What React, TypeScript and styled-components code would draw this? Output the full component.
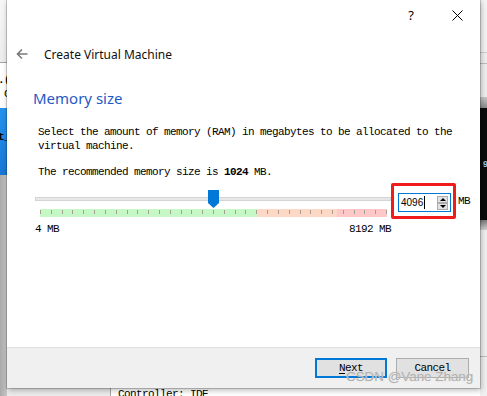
import React from "react";
import styled, { createGlobalStyle } from "styled-components";

const mono = `"Liberation Mono", "DejaVu Sans Mono", monospace`;
const ui = `"Noto Sans", "Open Sans", sans-serif`;

const GlobalStyle = createGlobalStyle`
  html, body {
    margin: 0;
    padding: 0;
    background: #ffffff;
  }
  body {
    width: 487px;
    height: 396px;
    overflow: hidden;
  }
`;

const Screen = styled.div`
  position: relative;
  width: 487px;
  height: 396px;
  overflow: hidden;
  display: grid;
  grid-template-columns: 7px 473px 7px;
  grid-template-rows: 388px 8px;
`;

const SideStrip = styled.div<{ $col: number }>`
  grid-row: 1 / 3;
  grid-column: ${(p) => p.$col};
  display: flex;
  flex-direction: column;
  overflow: hidden;
`;

const Band = styled.div<{ $h?: number; $bg: string; $line?: string }>`
  ${(p) => (p.$h ? `height: ${p.$h}px; flex: none;` : `flex: 1;`)}
  background: ${(p) => p.$bg};
  ${(p) => (p.$line ? `border-bottom: 1px solid ${p.$line};` : "")}
  overflow: hidden;
  white-space: pre;
`;

const BandText = styled.div<{ $bold?: boolean; $top: number; $color?: string; $size?: number }>`
  font-family: ${mono};
  font-size: ${(p) => p.$size ?? 11}px;
  font-weight: ${(p) => (p.$bold ? 700 : 400)};
  color: ${(p) => p.$color ?? "#000"};
  line-height: 14px;
  letter-spacing: -0.6px;
  margin-top: ${(p) => p.$top}px;
  margin-left: -2px;
`;

const BottomStrip = styled.div`
  grid-row: 2;
  grid-column: 2;
  display: flex;
  overflow: hidden;
`;

const BottomGray = styled.div`
  width: 103px;
  background: #ececec;
  border-right: 1px solid #a8a8a8;
`;

const BottomWhite = styled.div`
  flex: 1;
  background: #ffffff;
  padding-left: 7px;
  font-family: ${mono};
  font-size: 11px;
  letter-spacing: -0.6px;
  line-height: 14px;
  margin-top: -1px;
  white-space: pre;
`;

const Dialog = styled.div`
  grid-row: 1;
  grid-column: 2;
  position: relative;
  z-index: 1;
  background: #ffffff;
  display: flex;
  flex-direction: column;
  box-shadow: 0 0 0 1px rgba(0, 0, 0, 0.18), 1px 2px 6px rgba(0, 0, 0, 0.3);
`;

const TitleBar = styled.div`
  height: 30px;
  display: flex;
  justify-content: flex-end;
`;

const TitleButton = styled.div`
  width: 46px;
  height: 30px;
  display: flex;
  align-items: center;
  justify-content: center;
  font-family: ${ui};
  font-size: 13px;
  color: #000;
`;

const HeaderRow = styled.div`
  margin-top: 14px;
  height: 20px;
  display: flex;
  align-items: center;
  gap: 16px;
  padding-left: 9px;
`;

const HeaderTitle = styled.div`
  font-family: ${ui};
  font-size: 12px;
  color: #111;
`;

const Content = styled.div`
  display: flex;
  flex-direction: column;
  padding-left: 26px;
`;

const Heading = styled.div`
  margin-top: 24px;
  font-family: ${ui};
  font-size: 15px;
  line-height: 20px;
  color: #1f5ac6;
`;

const MonoText = styled.div<{ $top: number }>`
  margin-top: ${(p) => p.$top}px;
  padding-left: 5px;
  max-width: 420px;
  font-family: ${mono};
  font-size: 11px;
  line-height: 14px;
  letter-spacing: -0.6px;
  color: #000;
  b {
    font-weight: 700;
  }
`;

const SliderRow = styled.div`
  margin-top: 4px;
  padding-left: 2px;
  display: flex;
  align-items: center;
`;

const SliderArea = styled.div`
  position: relative;
  width: 356px;
  height: 36px;
  display: flex;
  flex-direction: column;
`;

const Track = styled.div`
  margin-top: 14px;
  height: 4px;
  box-sizing: border-box;
  background: #e8e8e8;
  border: 1px solid #d4d4d4;
`;

const TickBar = styled.div`
  margin-top: 8px;
  margin-left: 5px;
  width: 347px;
  height: 8px;
  background: linear-gradient(
    to right,
    #c5f8c5 0 218px,
    #fdd8c4 218px 297px,
    #ffc8c8 297px
  );
`;

const TickRow = styled.div`
  width: 347px;
  padding-top: 1px;
  display: flex;
  justify-content: space-between;
`;

const Tick = styled.div`
  width: 1px;
  height: 4px;
  background: #a59f92;
`;

const Thumb = styled.div`
  position: absolute;
  top: 7px;
  width: 11px;
  height: 18px;
  background: #0078d7;
  clip-path: polygon(0 0, 100% 0, 100% 72%, 50% 100%, 0 72%);
`;

const HighlightFrame = styled.div`
  border: 3px solid #f01b1b;
  border-radius: 2px;
  padding: 7px 2px 4px 4px;
`;

const SpinBox = styled.div`
  width: 53px;
  height: 19px;
  box-sizing: border-box;
  border: 1px solid #0078d7;
  background: #fff;
  display: flex;
  align-items: center;
  padding: 0 2px;
`;

const SpinValue = styled.div`
  flex: 1;
  display: flex;
  align-items: center;
  font-family: "Liberation Sans", Arial, sans-serif;
  font-size: 10px;
  color: #000;
`;

const Caret = styled.span`
  width: 1px;
  height: 13px;
  margin-left: 1px;
  background: #000;
`;

const SpinButtons = styled.div`
  display: flex;
  flex-direction: column;
`;

const SpinBtn = styled.div<{ $up?: boolean }>`
  width: 11px;
  height: 7px;
  box-sizing: border-box;
  border: 1px solid #adadad;
  background: #e3e3e3;
  display: flex;
  align-items: center;
  justify-content: center;
  &::after {
    content: "";
    border-left: 3px solid transparent;
    border-right: 3px solid transparent;
    ${(p) => (p.$up ? "border-bottom: 3px solid #000;" : "border-top: 3px solid #000;")}
  }
`;

const UnitLabel = styled.div`
  margin-left: 2px;
  font-family: ${mono};
  font-size: 11px;
  letter-spacing: -0.6px;
  color: #000;
`;

const ScaleLabels = styled.div`
  margin-top: 3px;
  margin-left: 2px;
  width: 356px;
  display: flex;
  justify-content: space-between;
  font-family: ${mono};
  font-size: 11px;
  line-height: 14px;
  letter-spacing: -0.6px;
  color: #000;
`;

const Spacer = styled.div`
  flex: 1;
`;

const Footer = styled.div`
  height: 41px;
  box-sizing: border-box;
  border-top: 1px solid #dfdfdf;
  background: #f0f0f0;
  display: flex;
  justify-content: flex-end;
  align-items: center;
  gap: 9px;
  padding-right: 11px;
`;

const FooterButton = styled.div<{ $primary?: boolean; $w: number }>`
  width: ${(p) => p.$w}px;
  height: 20px;
  box-sizing: border-box;
  background: #e1e1e1;
  border: ${(p) => (p.$primary ? "2px solid #0078d7" : "1px solid #adadad")};
  display: flex;
  align-items: center;
  justify-content: center;
  font-family: ${mono};
  font-size: 11px;
  letter-spacing: -0.6px;
  color: #000;
  u {
    text-decoration: underline;
    text-underline-offset: 2px;
  }
`;

const Watermark = styled.div`
  position: absolute;
  left: 346px;
  top: 369px;
  z-index: 2;
  font-family: "Liberation Sans", Arial, sans-serif;
  font-size: 13.4px;
  color: rgba(172, 172, 172, 0.95);
  text-shadow: 0 0 1px rgba(255, 255, 255, 0.9), 0 0 1px rgba(90, 90, 90, 0.35);
  white-space: nowrap;
`;

const memory = { value: 4096, max: 8192 };
const TRACK_W = 356;

export default function App() {
  const thumbLeft = Math.round((memory.value / memory.max) * TRACK_W - 5.5);

  return (
    <>
      <GlobalStyle />
      <Screen>
        <SideStrip $col={1}>
          <Band $h={62} $bg="linear-gradient(#f7f7f7, #ececec)" $line="#a6a6a6" />
          <Band $h={45} $bg="#ffffff">
            <BandText $bold $top={10}>.(</BandText>
            <BandText $top={0}> C</BandText>
          </Band>
          <Band $h={67} $bg="linear-gradient(#2592ef, #1877d6)">
            <BandText $bold $top={22}>t_</BandText>
          </Band>
          <Band $bg="linear-gradient(to right, #a9a9a9, #c8c8c8)" />
        </SideStrip>

        <Dialog>
          <TitleBar>
            <TitleButton>?</TitleButton>
            <TitleButton>
              <svg width="11" height="11" viewBox="0 0 11 11">
                <path d="M0.5 0.5 L10.5 10.5 M10.5 0.5 L0.5 10.5" stroke="#000" strokeWidth="1" />
              </svg>
            </TitleButton>
          </TitleBar>

          <HeaderRow>
            <svg width="12" height="12" viewBox="0 0 12 12">
              <path
                d="M11.5 6 H1.5 M6 1.5 L1.5 6 L6 10.5"
                stroke="#7a7a7a"
                strokeWidth="1.6"
                fill="none"
              />
            </svg>
            <HeaderTitle>Create Virtual Machine</HeaderTitle>
          </HeaderRow>

          <Content>
            <Heading>Memory size</Heading>
            <MonoText $top={17}>
              Select the amount of memory (RAM) in megabytes to be allocated to the virtual machine.
            </MonoText>
            <MonoText $top={12}>
              The recommended memory size is <b>1024</b> MB.
            </MonoText>

            <SliderRow>
              <SliderArea>
                <Track />
                <TickBar>
                  <TickRow>
                    {Array.from({ length: 33 }, (_, i) => (
                      <Tick key={i} />
                    ))}
                  </TickRow>
                </TickBar>
                <Thumb style={{ left: thumbLeft }} />
              </SliderArea>
              <HighlightFrame>
                <SpinBox>
                  <SpinValue>
                    {memory.value}
                    <Caret />
                  </SpinValue>
                  <SpinButtons>
                    <SpinBtn $up />
                    <SpinBtn />
                  </SpinButtons>
                </SpinBox>
              </HighlightFrame>
              <UnitLabel>MB</UnitLabel>
            </SliderRow>

            <ScaleLabels>
              <span>4 MB</span>
              <span>{memory.max} MB</span>
            </ScaleLabels>
          </Content>

          <Spacer />

          <Footer>
            <FooterButton $primary $w={72}>
              <span>
                <u>N</u>ext
              </span>
            </FooterButton>
            <FooterButton $w={73}>Cancel</FooterButton>
          </Footer>
        </Dialog>

        <SideStrip $col={3}>
          <Band $h={52} $bg="#f4f4f4" $line="#cfcfcf" />
          <Band $h={10} $bg="#f0f0f0" $line="#bdbdbd" />
          <Band $h={33} $bg="#efefef" />
          <Band $h={11} $bg="linear-gradient(#cacaca, #8c8c8c)" />
          <Band $h={112} $bg="#0b0b0b">
            <BandText $bold $top={50} $color="#9cc4e6" $size={9}>
              {" 97"}
            </BandText>
          </Band>
          <Band $h={10} $bg="linear-gradient(#7a7a7a, #d2d2d2)" />
          <Band $h={126} $bg="#f0f0f0" $line="#bdbdbd" />
          <Band $bg="#f0f0f0" />
        </SideStrip>

        <BottomStrip>
          <BottomGray />
          <BottomWhite>Controller: IDE</BottomWhite>
        </BottomStrip>

        <Watermark>CSDN @Vane Zhang</Watermark>
      </Screen>
    </>
  );
}
